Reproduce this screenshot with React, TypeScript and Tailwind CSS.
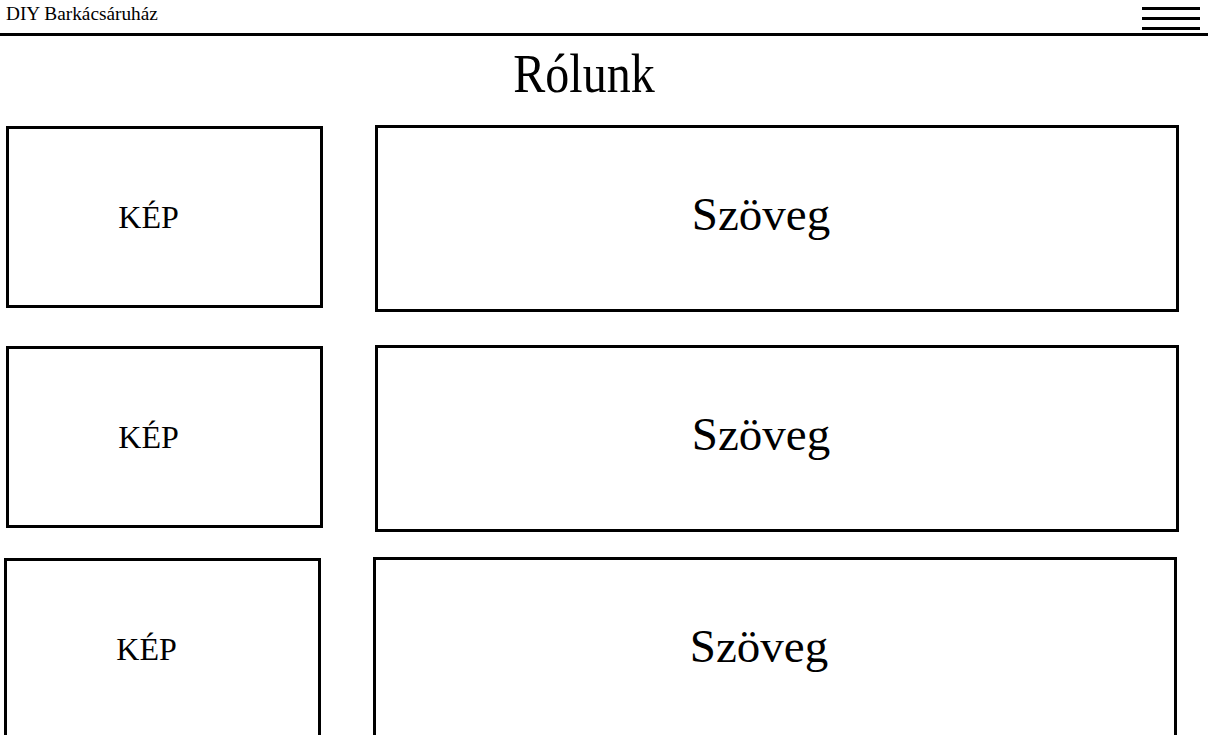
import React from 'react'

const rows = [
  { left: 'ml-[6px]', gapTop: 'mt-[28px]' },
  { left: 'ml-[6px]', gapTop: 'mt-[33px]' },
  { left: 'ml-[4px]', gapTop: 'mt-[25px]' },
]

function Row({ left, gapTop }: { left: string; gapTop: string }) {
  return (
    <div className={`flex items-start ${gapTop} ${left}`}>
      <div className="mt-[1px] flex h-[182px] w-[317px] shrink-0 items-center justify-center border-[3px] border-black pr-[32px] text-[32px] leading-[37px]">
        KÉP
      </div>
      <div className="ml-[52px] flex h-[187px] w-[804px] shrink-0 items-center justify-center border-[3px] border-black pr-[32px] pb-[10px] text-[47px] leading-[54px]">
        Szöveg
      </div>
    </div>
  )
}

export default function App() {
  return (
    <div className="h-[735px] overflow-hidden bg-white text-black font-['Liberation_Serif','Times_New_Roman',serif]">
      <header className="flex h-[36px] items-start justify-between border-b-[3px] border-black">
        <span className="ml-[6px] mt-[3px] text-[19.3px] leading-[22px]">DIY Barkácsáruház</span>
        <button className="mr-[8px] mt-[7px] flex flex-col gap-[7px]" aria-label="Menü">
          <span className="block h-[3px] w-[58px] bg-black" />
          <span className="block h-[3px] w-[58px] bg-black" />
          <span className="block h-[3px] w-[58px] bg-black" />
        </button>
      </header>

      <h1 className="mt-[13px] pr-[40px] text-center text-[48px] leading-[48px] scale-y-[1.16]">Rólunk</h1>

      {rows.map((r, i) => (
        <Row key={i} left={r.left} gapTop={r.gapTop} />
      ))}
    </div>
  )
}
